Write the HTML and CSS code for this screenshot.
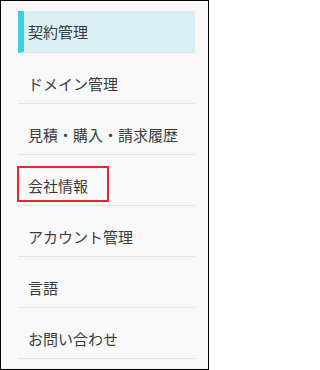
FILE: index.html
```html
<!DOCTYPE html>
<html lang="ja">
<head>
<meta charset="utf-8">
<link rel="stylesheet" href="styles.css">
</head>
<body>
<div class="frame">
  <ul class="menu">
    <li class="item active"><span class="label">契約管理</span></li>
    <li class="item"><span class="label">ドメイン管理</span></li>
    <li class="item"><span class="label">見積・購入・請求履歴</span></li>
    <li class="item marked"><span class="label">会社情報</span><span class="mark"></span></li>
    <li class="item"><span class="label">アカウント管理</span></li>
    <li class="item"><span class="label">言語</span></li>
    <li class="item"><span class="label">お問い合わせ</span></li>
  </ul>
</div>
</body>
</html>
```

FILE: styles.css
```css
html, body {
  margin: 0;
  padding: 0;
}
.frame {
  box-sizing: border-box;
  width: 209px;
  height: 370px;
  border: 1px solid #000;
  background: #f8f8f8;
  padding: 11px 13px 0 17px;
  font-family: "Noto Sans CJK JP", "Noto Sans", sans-serif;
}
.menu {
  list-style: none;
  margin: 0;
  padding: 0;
  display: flex;
  flex-direction: column;
  gap: 10px;
}
.item {
  position: relative;
  height: 40px;
  border-bottom: 1px solid #e3e3e3;
  display: flex;
  align-items: center;
  padding-left: 10px;
  font-size: 15px;
  color: #3c3c3c;
  line-height: 1;
}
.item.active {
  background: #d9eff4;
  border-left: 6px solid #3dcbe8;
  padding-left: 4px;
  height: 41px;
  margin-top: -1px;
}
.mark {
  position: absolute;
  left: -1px;
  top: 1px;
  width: 88px;
  height: 32px;
  border: 2px solid #e8262b;
}
```
